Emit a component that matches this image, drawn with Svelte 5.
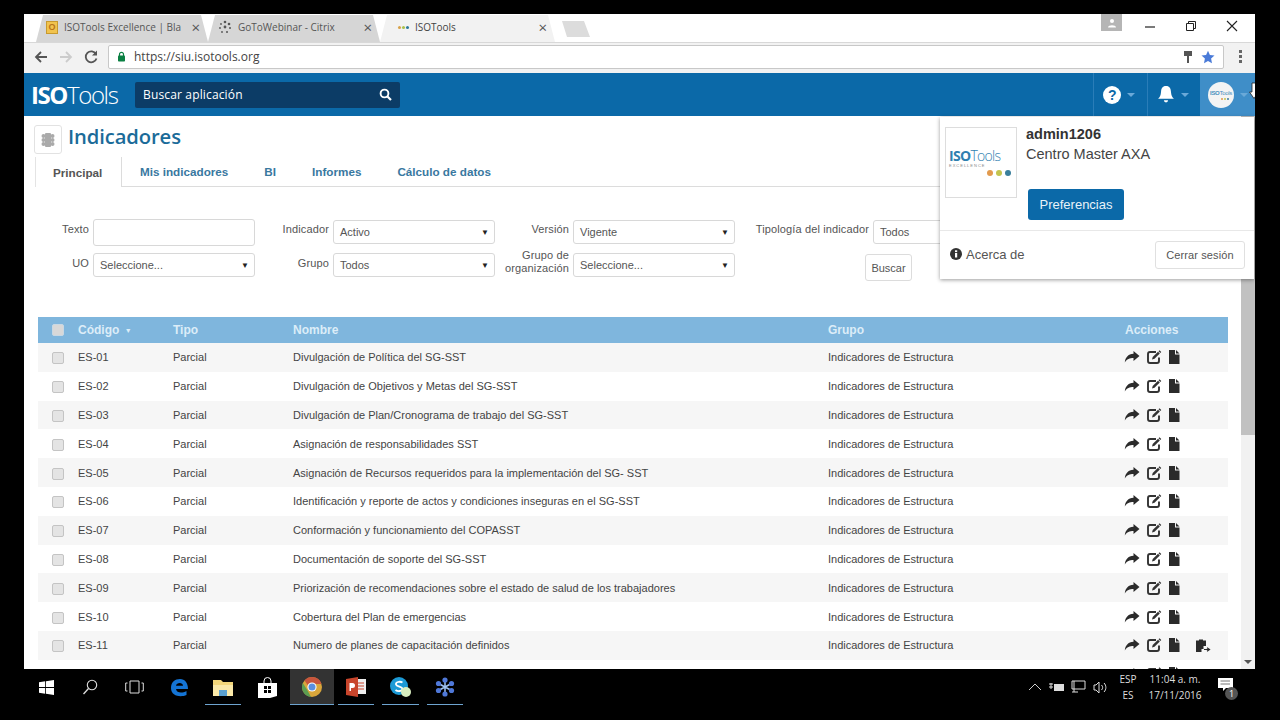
<script>
  const rows = [
    ['ES-01', 'Divulgación de Política del SG-SST'],
    ['ES-02', 'Divulgación de Objetivos y Metas del SG-SST'],
    ['ES-03', 'Divulgación de Plan/Cronograma de trabajo del SG-SST'],
    ['ES-04', 'Asignación de responsabilidades SST'],
    ['ES-05', 'Asignación de Recursos requeridos para la implementación del SG- SST'],
    ['ES-06', 'Identificación y reporte de actos y condiciones inseguras en el SG-SST'],
    ['ES-07', 'Conformación y funcionamiento del COPASST'],
    ['ES-08', 'Documentación de soporte del SG-SST'],
    ['ES-09', 'Priorización de recomendaciones sobre el estado de salud de los trabajadores'],
    ['ES-10', 'Cobertura del Plan de emergencias'],
    ['ES-11', 'Numero de planes de capacitación definidos']
  ];
</script>

{#snippet actions(extra)}
  <div class="actions">
    <svg width="16" height="14" viewBox="0 0 16 14"><path d="M9.500 1 15.500 6 9.500 11V8C5.500 8 3 9 .8 12.500 1.200 7.500 4 4 9.500 3.700Z" fill="#2b2b2b"/></svg>
    <svg width="16" height="16" viewBox="0 0 16 16"><path d="M10 3H4A2 2 0 0 0 2 5v7a2 2 0 0 0 2 2h7a2 2 0 0 0 2-2V8.500" fill="none" stroke="#333" stroke-width="1.900"/><path d="M6 10.500 6.700 8 12 2.700 13.800 4.500 8.500 9.800Z" fill="#333"/><path d="M13 1.700 14.800 3.500" stroke="#333" stroke-width="1.300"/></svg>
    <svg width="12" height="14" viewBox="0 0 12 14"><path d="M1 0H7V4.500H11.500V14H1ZM8 0 11.500 3.500H8Z" fill="#2b2b2b"/></svg>
    {#if extra}
      <svg class="extra" width="16" height="15" viewBox="0 0 16 15"><path d="M1 2.500H4V1.500H8V2.500H11V8H8.500V11H6.500V14H1Z" fill="#2b2b2b"/><path d="M9 11.500H13.500M12 9.800 14.500 11.500 12 13.200" fill="none" stroke="#2b2b2b" stroke-width="1.200"/></svg>
    {/if}
  </div>
{/snippet}

<div class="screen">
  <div class="window">
    <div class="tabstrip">
      <div class="tab">
        <span class="fav-o">O</span><span class="tab-title">ISOTools Excellence | Bla</span><span class="x">×</span>
      </div>
      <div class="tab">
        <svg class="fav" width="14" height="14" viewBox="0 0 14 14"><g fill="#555"><circle cx="7" cy="2" r="1.300"/><circle cx="11" cy="4" r="1.300"/><circle cx="3" cy="4" r=".9"/><circle cx="2" cy="8" r=".9"/><circle cx="12" cy="8" r="1"/><circle cx="4" cy="12" r=".9"/><circle cx="9" cy="12" r="1"/><circle cx="7" cy="7" r="1.400"/></g></svg>
        <span class="tab-title">GoToWebinar - Citrix</span><span class="x">×</span>
      </div>
      <div class="tab active">
        <span class="dots"><i class="d1"></i><i class="d2"></i><i class="d3"></i></span>
        <span class="tab-title">ISOTools</span><span class="x">×</span>
      </div>
      <div class="newtab"></div>
      <div class="winctl">
        <div class="profile"><svg width="10" height="10" viewBox="0 0 10 10"><circle cx="5" cy="3" r="2" fill="#fff"/><path d="M1 9.500C1 6.500 9 6.500 9 9.500Z" fill="#fff"/></svg></div>
        <svg class="ctl" width="12" height="12" viewBox="0 0 12 12"><path d="M1 7H11" stroke="#222" stroke-width="1.200"/></svg>
        <svg class="ctl" width="12" height="12" viewBox="0 0 12 12"><path d="M1.500 3.500H8.500V10.500H1.500ZM3.500 3.500V1.500H10.500V8.500H8.500" fill="none" stroke="#222"/></svg>
        <svg class="ctl" width="12" height="12" viewBox="0 0 12 12"><path d="M1 1 11 11M11 1 1 11" stroke="#222" stroke-width="1.100"/></svg>
      </div>
    </div>

    <div class="toolbar">
      <svg width="16" height="16" viewBox="0 0 16 16"><path d="M14 8H3M8 3 3 8 8 13" fill="none" stroke="#555" stroke-width="1.800"/></svg>
      <svg width="16" height="16" viewBox="0 0 16 16"><path d="M2 8H13M8 3 13 8 8 13" fill="none" stroke="#ccc" stroke-width="1.800"/></svg>
      <svg width="16" height="16" viewBox="0 0 16 16"><path d="M13 5A5.500 5.500 0 1 0 13.500 9.500" fill="none" stroke="#555" stroke-width="1.800"/><path d="M14 1.500V6.500H9Z" fill="#555"/></svg>
      <div class="omnibox">
        <svg width="9" height="11" viewBox="0 0 9 11"><path d="M2.500 5V3.300a2 2 0 0 1 4 0V5" fill="none" stroke="#0b8043" stroke-width="1.200"/><rect x="1" y="4.500" width="7" height="6" rx=".8" fill="#0b8043"/></svg>
        <span class="url">https://siu.isotools.org</span>
        <svg class="key" width="10" height="14" viewBox="0 0 10 14"><path d="M1 1H9V6H6V13H4V6H1Z" fill="#555"/></svg>
        <svg width="14" height="14" viewBox="0 0 14 14"><path d="M7 .8 8.900 5 13.500 5.500 10.100 8.600 11 13.200 7 10.900 3 13.200 3.900 8.600.5 5.500 5.100 5Z" fill="#4a7bd8"/></svg>
      </div>
      <div class="kebab"><i></i><i></i><i></i></div>
    </div>

    <header class="appbar">
      <div class="logo"><b>ISO</b>Tools</div>
      <div class="search">
        <span>Buscar aplicación</span>
        <svg width="13" height="13" viewBox="0 0 13 13"><circle cx="5.500" cy="5.500" r="3.900" fill="none" stroke="#fff" stroke-width="1.900"/><path d="M8.500 8.500 12 12" stroke="#fff" stroke-width="2.200"/></svg>
      </div>
      <div class="appbar-right">
        <div class="cell">
          <span class="help">?</span><span class="caret"></span>
        </div>
        <div class="cell">
          <svg width="18" height="19" viewBox="0 0 17 18"><path d="M8.500 1C5 1 4 3.500 3.800 6.500 3.500 10 2.800 11.500 1 13H16C14.200 11.500 13.500 10 13.200 6.500 13 3.500 12 1 8.500 1Z" fill="#fff"/><path d="M6.500 14.500a2 2 0 0 0 4 0Z" fill="#fff"/></svg>
          <span class="caret"></span>
        </div>
        <div class="cell user">
          <span class="avatar"><span class="avatar-name"><b>ISO</b>Tools</span><span class="avatar-dots"><i class="o"></i><i class="y"></i><i class="b"></i></span></span><span class="caret"></span>
          <svg class="cursor" width="10" height="18" viewBox="0 0 10 18"><path d="M3 1H7V10H9.500L5 16.500.5 10H3Z" fill="#fff" stroke="#222" stroke-width=".8"/></svg>
        </div>
      </div>
    </header>

    <div class="body">
      <main class="content">
        <div class="title-row">
          <div class="title-icon">
            <svg width="14" height="16" viewBox="0 0 14 16"><g fill="#aaa"><rect x="4" y="1" width="6" height="14" rx="1"/><circle cx="2.500" cy="4" r="2"/><circle cx="11.500" cy="4" r="2"/><circle cx="2.500" cy="8" r="2"/><circle cx="11.500" cy="8" r="2"/><circle cx="2.500" cy="12" r="2"/><circle cx="11.500" cy="12" r="2"/></g></svg>
          </div>
          <h1>Indicadores</h1>
        </div>

        <nav class="tabs">
          <span class="nav-tab current">Principal</span>
          <span class="nav-tab">Mis indicadores</span>
          <span class="nav-tab">BI</span>
          <span class="nav-tab">Informes</span>
          <span class="nav-tab">Cálculo de datos</span>
        </nav>

        <div class="filters">
          <label class="up">Texto</label>
          <div class="input"></div>
          <label class="up">Indicador</label>
          <div class="select"><span>Activo</span><em>▼</em></div>
          <label class="up">Versión</label>
          <div class="select"><span>Vigente</span><em>▼</em></div>
          <label class="up">Tipología del indicador</label>
          <div class="select"><span>Todos</span><em>▼</em></div>

          <label>UO</label>
          <div class="select"><span>Seleccione...</span><em>▼</em></div>
          <label>Grupo</label>
          <div class="select"><span>Todos</span><em>▼</em></div>
          <label class="two">Grupo de organización</label>
          <div class="select"><span>Seleccione...</span><em>▼</em></div>
          <button class="buscar">Buscar</button>
        </div>

        <table>
          <thead>
            <tr>
              <th class="c-check"><span class="check head"></span></th>
              <th class="c-code">Código <small>▼</small></th>
              <th class="c-type">Tipo</th>
              <th class="c-name">Nombre</th>
              <th class="c-group">Grupo</th>
              <th>Acciones</th>
            </tr>
          </thead>
          <tbody>
            {#each rows as [code, name], i}
              <tr>
                <td><span class="check"></span></td>
                <td>{code}</td>
                <td>Parcial</td>
                <td>{name}</td>
                <td>Indicadores de Estructura</td>
                <td>{@render actions(i === 10)}</td>
              </tr>
            {/each}
            <tr>
              <td></td><td></td><td></td><td></td><td></td>
              <td>{@render actions(false)}</td>
            </tr>
          </tbody>
        </table>
      </main>

      <div class="scrollbar">
        <div class="thumb"></div>
        <span class="arrow"></span>
      </div>
    </div>

    <aside class="popup">
      <div class="popup-top">
        <div class="org-logo">
          <div class="org-name"><b>ISO</b>Tools</div>
          <div class="org-sub">EXCELLENCE</div>
          <div class="org-dots"><i class="o"></i><i class="y"></i><i class="b"></i></div>
        </div>
        <div class="who">
          <strong>admin1206</strong>
          <span>Centro Master AXA</span>
          <button class="pref">Preferencias</button>
        </div>
      </div>
      <div class="popup-foot">
        <div class="about">
          <svg width="12" height="12" viewBox="0 0 12 12"><circle cx="6" cy="6" r="6" fill="#333"/><rect x="5" y="5" width="2.200" height="4.500" fill="#fff"/><rect x="5" y="2.300" width="2.200" height="1.800" fill="#fff"/></svg>
          <span>Acerca de</span>
        </div>
        <button class="logout">Cerrar sesión</button>
      </div>
    </aside>
  </div>

  <footer class="taskbar">
    <div class="task-left">
      <div class="tb"><svg width="15" height="15" viewBox="0 0 15 15"><path d="M0 2.200 6.200 1.300V7H0ZM7 1.200 15 0V7H7ZM0 8H6.200V13.700L0 12.800ZM7 8H15V15L7 13.800Z" fill="#fff"/></svg></div>
      <div class="tb"><svg width="16" height="16" viewBox="0 0 16 16"><circle cx="10" cy="6" r="4.700" fill="none" stroke="#ddd" stroke-width="1.100"/><path d="M6.500 9.500 1.500 15" stroke="#ddd" stroke-width="1.300"/></svg></div>
      <div class="tb"><svg width="19" height="14" viewBox="0 0 19 14"><path d="M5 1H14V13H5ZM2.500 3H.7V11H2.500M16.500 3H18.300V11H16.500" fill="none" stroke="#ddd"/></svg></div>
      <div class="tb"><svg width="19" height="19" viewBox="0 0 19 19"><path d="M1 10C1 4 5 1 10 1 15 1 18 5 18 11H6C6.500 15 12 15.500 16.500 13V17C11 19.500 1 18.500 1 10ZM6 7.800H13C13 4 6.500 4 6 7.800Z" fill="#1474d4"/></svg></div>
      <div class="tb on"><svg width="20" height="17" viewBox="0 0 20 17"><path d="M0 1H8L10 3H20V17H0Z" fill="#f3d67a"/><rect y="6" width="20" height="11" fill="#fbe9a9"/><rect x="6" y="11" width="8" height="6" fill="#5aa0d0"/></svg></div>
      <div class="tb"><svg width="19" height="21" viewBox="0 0 19 21"><path d="M6 6V4a3.500 3.500 0 0 1 7 0V6" fill="none" stroke="#fff"/><path d="M0 6H19V19L12 21H0Z" fill="#fff"/><path d="M6 9H9V12H6ZM10 9H13V12H10ZM6 13H9V16H6ZM10 13H13V16H10Z" fill="#000"/></svg></div>
      <div class="tb on active">
        <svg width="20" height="20" viewBox="0 0 20 20"><circle cx="10" cy="10" r="10" fill="#d9a63b"/><path d="M10 0A10 10 0 0 1 19.500 7H10A3 3 0 0 0 7 10L2.500 3.400A10 10 0 0 1 10 0Z" fill="#c8553d"/><path d="M.8 6 5.500 13.500 9 20A10 10 0 0 1 .8 6Z" fill="#5c9e52"/><circle cx="10" cy="10" r="4.600" fill="#fff"/><circle cx="10" cy="10" r="3.500" fill="#5b8fe0"/></svg>
      </div>
      <div class="tb on"><svg width="20" height="20" viewBox="0 0 20 20"><rect x="9" y="2" width="11" height="15" fill="#eee"/><path d="M11 6H18M11 9H18M11 12H18" stroke="#c8452c"/><path d="M0 2 12 0V20L0 18Z" fill="#c8452c"/><path d="M3.500 6H6.500a2 2 0 0 1 0 5H5V14H3.500Z" fill="#fff"/></svg></div>
      <div class="tb on"><svg width="22" height="22" viewBox="0 0 22 22"><circle cx="9" cy="10" r="9" fill="#1c9ad6"/><path d="M12.500 6.500C10 5 5.500 6 6 8.500S12.500 10.500 12.500 13 7.500 15.500 5.500 14" fill="none" stroke="#fff" stroke-width="1.800"/><circle cx="16" cy="16" r="5" fill="#d8eec0"/></svg></div>
      <div class="tb on"><svg width="20" height="20" viewBox="0 0 20 20"><path d="M10 3V17M3.500 6.500 16.500 13.500M16.500 6.500 3.500 13.500" stroke="#9fc2f0" stroke-width="1.500"/><g fill="#4f78d8"><circle cx="10" cy="3" r="2.600"/><circle cx="10" cy="17" r="2.600"/><circle cx="3.500" cy="6.500" r="2.600"/><circle cx="16.500" cy="6.500" r="2.600"/><circle cx="3.500" cy="13.500" r="2.600"/><circle cx="16.500" cy="13.500" r="2.600"/></g></svg></div>
    </div>
    <div class="tray">
      <svg width="14" height="8" viewBox="0 0 14 8"><path d="M1 7 7 1 13 7" fill="none" stroke="#ccc"/></svg>
      <svg width="15" height="10" viewBox="0 0 15 10"><rect x="5" y="2" width="10" height="7" fill="#ddd"/><path d="M0 2H4M0 5H4M2 1V7" stroke="#ddd"/></svg>
      <svg width="15" height="14" viewBox="0 0 15 14"><path d="M1 1H14V9H1ZM3 1V12M1 12H7" fill="none" stroke="#ddd"/></svg>
      <svg width="15" height="13" viewBox="0 0 15 13"><path d="M1 4H3L6 1V12L3 9H1ZM8.500 4C10 5.500 10 7.500 8.500 9M11 2C13.500 4.500 13.500 8.500 11 11" fill="none" stroke="#ddd"/></svg>
      <div class="lang">ESP<br />ES</div>
      <div class="clock">11:04 a. m.<br />17/11/2016</div>
      <div class="notif">
        <svg width="15" height="14" viewBox="0 0 15 14"><path d="M0 0H15V10H8L5 13V10H0Z" fill="#fff"/><path d="M2.500 3H12M2.500 6H12" stroke="#777"/></svg>
        <span>1</span>
      </div>
    </div>
  </footer>
</div>

<style>
  :global(body) { margin: 0; background: #000; }

  .screen {
    width: 1280px;
    height: 720px;
    background: #000;
    overflow: hidden;
    font-family: "Liberation Sans", Arial, sans-serif;
    display: flex;
    flex-direction: column;
  }

  .window {
    position: relative;
    margin: 14px 25px 0 24px;
    height: 655px;
    display: flex;
    flex-direction: column;
    background: #fff;
  }

  /* browser chrome */
  .tabstrip {
    height: 28px;
    flex: none;
    display: flex;
    align-items: flex-end;
    padding-left: 12px;
    background: #fff;
    font-family: "Open Sans", sans-serif;
    font-size: 10px;
    color: #555;
  }
  .tab {
    width: 172px;
    height: 27px;
    padding: 0 8px 3px 10px;
    box-sizing: border-box;
    display: flex;
    align-items: center;
    gap: 6px;
    background: #d6d6d6;
    clip-path: polygon(0 100%, 7px 0, calc(100% - 7px) 0, 100% 100%);
    white-space: nowrap;
  }
  .tab.active { background: #f2f2f2; width: 175px; padding-left: 18px; color: #444; }
  .tab-title { flex: 1; overflow: hidden; }
  .x { font-size: 15px; line-height: 1; color: #555; }
  .fav-o {
    width: 12px; height: 13px;
    background: #f1c34e;
    border: 1px solid #c89a2e;
    box-sizing: border-box;
    color: #b8741a;
    font: bold 9px/11px "Liberation Sans", sans-serif;
    text-align: center;
  }
  .dots { display: flex; gap: 1px; }
  .dots i { width: 3px; height: 3px; border-radius: 50%; }
  .d1 { background: #d8a24a; }
  .d2 { background: #a9c04a; }
  .d3 { background: #2f7a9c; }
  .newtab {
    width: 28px; height: 16px;
    margin: 0 0 5px 7px;
    background: #dcdcdc;
    clip-path: polygon(0 0, 22px 0, 100% 100%, 5px 100%);
  }
  .winctl {
    margin-left: auto;
    align-self: stretch;
    display: flex;
    align-items: flex-start;
  }
  .profile {
    width: 21px; height: 17px;
    margin-right: 7px;
    background: #b5b5b5;
    display: flex; align-items: center; justify-content: center;
  }
  .ctl { margin: 6px 14px 0 15px; }
  .ctl:last-child { margin-right: 17px; }

  .toolbar {
    height: 31px;
    flex: none;
    box-sizing: border-box;
    display: flex;
    align-items: center;
    gap: 9px;
    padding: 0 8px 3px 9px;
    background: #f2f2f2;
    border-top: 1px solid #d8d8d8;
  }
  .omnibox {
    flex: 1;
    height: 24px;
    box-sizing: border-box;
    display: flex;
    align-items: center;
    gap: 6px;
    padding: 0 8px;
    background: #fff;
    border: 1px solid #c8c8c8;
    border-radius: 2px;
  }
  .url {
    flex: 1;
    margin-left: 2px;
    font-family: "Open Sans", sans-serif;
    font-size: 12px;
    color: #444;
  }
  .key { margin-right: 2px; }
  .kebab { width: 14px; display: flex; flex-direction: column; align-items: center; gap: 2px; }
  .kebab i { width: 3px; height: 3px; background: #666; }

  /* app bar */
  .appbar {
    height: 43px;
    flex: none;
    display: flex;
    align-items: center;
    background: #0b69a8;
    color: #fff;
  }
  .logo {
    width: 104px;
    margin-left: 7px;
    font-family: "Open Sans", sans-serif;
    font-size: 24px;
    font-weight: 300;
    letter-spacing: -1.400px;
    line-height: 1;
  }
  .logo b { font-weight: 700; }
  .search {
    width: 265px;
    height: 26px;
    box-sizing: border-box;
    padding: 0 8px;
    display: flex;
    align-items: center;
    justify-content: space-between;
    background: #0c3c66;
    border-radius: 2px;
    font-family: "Open Sans", sans-serif;
    font-size: 12px;
    letter-spacing: .15px;
  }
  .appbar-right { margin-left: auto; display: flex; align-self: stretch; }
  .cell {
    width: 53.500px;
    display: flex;
    align-items: center;
    justify-content: center;
    gap: 6px;
    border-left: 1px solid #2a7db8;
    box-sizing: border-box;
    position: relative;
    padding-right: 2px;
  }
  .cell.user { width: 55px; background: #3f8ec8; border-left: 0; justify-content: flex-start; padding: 0 0 0 8px; overflow: hidden; }
  .help {
    width: 18px; height: 18px;
    border-radius: 50%;
    background: #fff;
    color: #0b69a8;
    font: bold 14px/18px "Liberation Sans", sans-serif;
    text-align: center;
  }
  .caret {
    width: 0; height: 0;
    border: 4px solid transparent;
    border-top-color: #6aa9d8;
    border-bottom: 0;
  }
  .avatar {
    width: 26px; height: 26px;
    box-sizing: border-box;
    padding-top: 8px;
    border-radius: 50%;
    background: #f4f4f4;
    color: #4a8fbe;
    font: 6px/7px "Liberation Sans", sans-serif;
    text-align: center;
    letter-spacing: -.3px;
  }
  .avatar-name { display: block; }
  .avatar-name b { font-weight: 700; }
  .avatar-dots { display: flex; justify-content: flex-end; gap: 1px; padding: 1px 5px 0 0; }
  .avatar-dots i { width: 2px; height: 2px; border-radius: 50%; }
  .avatar-dots .o { background: #e29a4e; }
  .avatar-dots .y { background: #c3c44e; }
  .avatar-dots .b { background: #3a7f9c; }
  .cursor { position: absolute; right: -4px; top: 9px; }

  /* page */
  .body { flex: 1; min-height: 0; display: flex; }
  .content { flex: 1; min-width: 0; overflow: hidden; background: #fff; color: #444; }

  .title-row {
    height: 41px;
    box-sizing: border-box;
    padding: 9px 0 0 10px;
    display: flex;
    align-items: flex-start;
    gap: 6px;
  }
  .title-icon {
    width: 28px; height: 29px;
    box-sizing: border-box;
    display: flex; align-items: center; justify-content: center;
    border: 1px solid #e2e2e2;
    border-radius: 3px;
  }
  h1 {
    margin: 0;
    font-family: "Open Sans", sans-serif;
    font-size: 20.200px;
    font-weight: 600;
    line-height: 22px;
    color: #1b6b99;
    letter-spacing: -.1px;
  }

  .tabs {
    height: 30px;
    margin-left: 11px;
    box-sizing: border-box;
    display: flex;
    border-bottom: 1px solid #dcdcdc;
  }
  .nav-tab {
    padding: 8px 18px 0;
    font-size: 11.700px;
    font-weight: 700;
    color: #39789f;
  }
  .nav-tab.current {
    height: 30px;
    box-sizing: border-box;
    width: 87px;
    color: #555;
    padding: 9px 0 0 17px;
    background: #fff;
    border-left: 1px solid #e4e4e4;
    border-right: 1px solid #dcdcdc;
  }

  .filters {
    margin: 32px 0 0 11px;
    display: grid;
    grid-template-columns: 58px 162px 78px 162px 78px 162px 138px 102px;
    grid-template-rows: 27px 27px;
    row-gap: 6px;
    font-size: 11px;
    color: #555;
  }
  label {
    padding: 5px 4px 0 0;
    text-align: right;
    line-height: 13px;
    letter-spacing: .13px;
    white-space: nowrap;
  }
  label.up { padding-top: 4px; }
  label.two { white-space: normal; margin-top: -3px; padding-top: 0; line-height: 13px; }
  .input {
    height: 27px;
    box-sizing: border-box;
    background: #fff;
    border: 1px solid #d8d8d8;
    border-radius: 3px;
  }
  .select {
    height: 24px;
    margin-top: 1px;
    box-sizing: border-box;
    padding: 0 5px 0 6px;
    display: flex;
    align-items: center;
    justify-content: space-between;
    background: #fff;
    border: 1px solid #d8d8d8;
    border-radius: 3px;
  }
  .select em { font-style: normal; font-size: 8px; color: #222; }
  .buscar {
    grid-column: 7 / 9;
    width: 47px;
    height: 27px;
    margin: 2px 0 0 130px;
    padding: 0;
    font: 11px "Liberation Sans", sans-serif;
    color: #555;
    background: #fff;
    border: 1px solid #dcdcdc;
    border-radius: 3px;
  }

  table {
    margin: 38px 0 0 14px;
    width: 1190px;
    table-layout: fixed;
    border-collapse: collapse;
    font-size: 11px;
    color: #444;
  }
  thead tr { height: 26px; background: #7fb6dd; }
  th {
    padding: 0;
    text-align: left;
    font-size: 12px;
    font-weight: 700;
    color: #dcedf8;
  }
  th small { font-size: 7px; margin-left: 2px; vertical-align: 1px; }
  tbody tr { height: 28.800px; }
  tbody tr:nth-child(odd) { background: #f6f6f6; }
  td { padding: 0; white-space: nowrap; }
  .c-check { width: 40px; }
  .c-code { width: 95px; }
  .c-type { width: 120px; }
  .c-name { width: 535px; }
  .c-group { width: 297px; }
  .check {
    display: block;
    width: 12px; height: 12px;
    margin: 2px 0 0 14px;
    box-sizing: border-box;
    background: #e4e4e4;
    border: 1px solid #c4c4c4;
    border-radius: 2px;
  }
  .check.head { background: #d8d8d8; border-color: #c8d8e4; margin-top: 0; }
  .actions { display: flex; align-items: center; gap: 6px; margin-left: -1px; }
  .actions svg { flex: none; }
  .extra { margin-left: 9px; }

  .scrollbar {
    width: 14px;
    flex: none;
    position: relative;
    background: #f1f1f1;
  }
  .thumb { height: 319px; background: #c1c1c1; }
  .arrow {
    position: absolute;
    left: 3px; bottom: 5px;
    border: 4px solid transparent;
    border-top-color: #555;
    border-bottom: 0;
  }

  /* user popup */
  .popup {
    position: absolute;
    left: 916px; top: 103px;
    width: 314px; height: 162px;
    box-sizing: border-box;
    display: flex;
    flex-direction: column;
    background: #fff;
    box-shadow: 0 1px 4px rgba(0, 0, 0, .4);
    font-size: 14.500px;
    color: #444;
  }
  .popup-top {
    height: 114px;
    box-sizing: border-box;
    padding: 9px 0 0 5px;
    display: flex;
    gap: 9px;
    border-bottom: 1px solid #e8e8e8;
  }
  .org-logo {
    width: 72px; height: 71px;
    margin-top: 1px;
    box-sizing: border-box;
    padding: 21px 0 0 3px;
    border: 1px solid #ddd;
  }
  .org-name {
    font-family: "Open Sans", sans-serif;
    font-size: 14px;
    font-weight: 300;
    line-height: 14px;
    letter-spacing: -.7px;
    color: #2f7fb0;
  }
  .org-name b { font-weight: 700; }
  .org-sub { font-size: 4px; letter-spacing: 1px; color: #888; line-height: 6px; }
  .org-dots { display: flex; justify-content: flex-end; gap: 3px; padding-right: 5px; margin-top: 1px; }
  .org-dots i { width: 6px; height: 6px; border-radius: 50%; }
  .org-dots .o { background: #e29a4e; }
  .org-dots .y { background: #c3c44e; }
  .org-dots .b { background: #3a7f9c; }
  .who { display: flex; flex-direction: column; align-items: flex-start; }
  .who strong { font-size: 14.500px; line-height: 16px; color: #333; }
  .who span { margin-top: 4px; line-height: 16px; }
  .pref {
    width: 96px; height: 31px;
    margin: 27px 0 0 2px;
    padding: 0;
    font: 13px "Liberation Sans", sans-serif;
    color: #e8f2f9;
    background: #0b69a8;
    border: 0;
    border-radius: 3px;
  }
  .popup-foot {
    flex: 1;
    display: flex;
    align-items: center;
    justify-content: space-between;
    padding: 0 9px 0 10px;
  }
  .about { display: flex; align-items: center; gap: 4px; margin-top: -2px; font-size: 13px; color: #555; }
  .logout {
    width: 90px; height: 28px;
    padding: 0;
    font: 11px "Liberation Sans", sans-serif;
    letter-spacing: .1px;
    color: #555;
    background: #fff;
    border: 1px solid #e0e0e0;
    border-radius: 3px;
  }

  /* windows taskbar */
  .taskbar {
    height: 36px;
    width: 1250px;
    flex: none;
    display: flex;
    justify-content: space-between;
    color: #ddd;
  }
  .task-left { display: flex; padding-left: 24px; }
  .tb {
    width: 44.300px;
    height: 36px;
    box-sizing: border-box;
    display: flex;
    align-items: center;
    justify-content: center;
    position: relative;
  }
  .tb.active { background: #333; }
  .tb.on::after {
    content: "";
    position: absolute;
    left: 4px; right: 4px; bottom: 0;
    height: 1px;
    background: #6ea4d0;
  }
  .tb.active.on::after { left: 0; right: 0; }
  .tray {
    display: flex;
    align-items: center;
    height: 36px;
    gap: 7px;
    font-family: "Open Sans", sans-serif;
    font-size: 10px;
    line-height: 16px;
    text-align: center;
    padding-right: 16px;
  }
  .lang { margin-left: 1px; width: 24px; }
  .clock { margin-left: -2px; width: 60px; }
  .notif { position: relative; margin-left: 4px; width: 18px; height: 18px; }
  .notif span {
    position: absolute;
    right: -4px; bottom: -4px;
    width: 13px; height: 13px;
    border-radius: 50%;
    background: #555;
    font-size: 9px;
    line-height: 13px;
    color: #fff;
  }
</style>
